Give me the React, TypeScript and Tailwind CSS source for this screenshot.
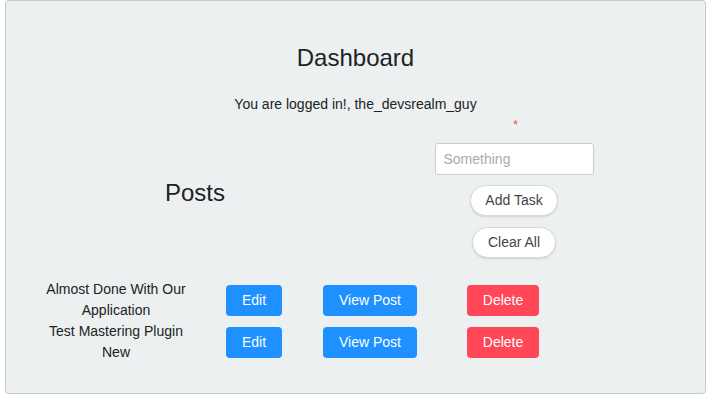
import React from "react";

const posts = [
  { id: 1, title: "Almost Done With Our Application" },
  { id: 2, title: "Test Mastering Plugin New" },
];

const App = () => {
  return (
    <div className="w-[725px] h-[396px] bg-white pl-[5px] font-['Liberation_Sans',Arial,sans-serif] text-[#222]">
      <div className="w-[701px] h-[394px] border border-[#c4c8cb] rounded bg-[#ecf0f1] flex flex-col">
        <h1 className="mt-[43px] text-center text-[24px] leading-[28px] text-[#222]">Dashboard</h1>
        <p className="mt-[22px] text-center text-[14px] leading-[20px] text-[#222]">
          You are logged in!, the_devsrealm_guy
        </p>

        <div className="flex flex-row mt-[5px]">
          <div className="w-[378px] flex items-center justify-center pt-[8px]">
            <h2 className="text-[24px] leading-[28px] text-[#222]">Posts</h2>
          </div>
          <div className="w-[260px] flex flex-col items-center">
            <span className="text-[12px] leading-[12px] text-[#e74c3c] ml-[3px]">*</span>
            <input
              placeholder="Something"
              className="mt-[12px] w-[159px] h-[32px] bg-white border border-[#ccc] rounded-[3px] px-[8px] text-[14px] placeholder:text-[#aaa] outline-none"
            />
            <button className="mt-[10px] w-[88px] h-[31px] bg-white border border-[#d8d8d8] rounded-full text-[14px] text-[#444] shadow-[0_1px_2px_rgba(0,0,0,0.12)]">
              Add Task
            </button>
            <button className="mt-[11px] w-[84px] h-[31px] bg-white border border-[#d8d8d8] rounded-full text-[14px] text-[#444] shadow-[0_1px_2px_rgba(0,0,0,0.12)]">
              Clear All
            </button>
          </div>
        </div>

        <div className="mt-[21px] flex flex-col">
          {posts.map((post) => (
            <div key={post.id} className="grid grid-cols-[35px_150px_126px_106px_160px] h-[42px] items-center">
              <div />
              <p className="text-center text-[14px] leading-[21px] text-[#222] px-[4px]">{post.title}</p>
              <div className="flex justify-center">
                <button className="w-[56px] h-[31px] rounded-[4px] bg-[#1e90ff] text-white text-[14px]">Edit</button>
              </div>
              <div className="flex justify-center">
                <button className="w-[94px] h-[31px] rounded-[4px] bg-[#1e90ff] text-white text-[14px]">View Post</button>
              </div>
              <div className="flex justify-center">
                <button className="w-[72px] h-[31px] rounded-[4px] bg-[#ff4757] text-white text-[14px]">Delete</button>
              </div>
            </div>
          ))}
        </div>
      </div>
    </div>
  );
};

export default App;
